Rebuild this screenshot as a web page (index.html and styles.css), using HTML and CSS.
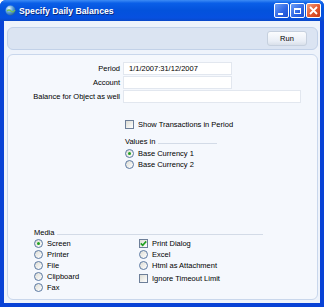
FILE: index.html
```html
<!DOCTYPE html>
<html lang="en">
<head>
    <meta charset="UTF-8">
    <title>Specify Daily Balances</title>
    <link rel="stylesheet" href="styles.css">
</head>
<body>
    <div class="window">
        <div class="titlebar">
            <svg class="app-icon" width="11" height="11" viewBox="0 0 11 11">
                <defs>
                    <radialGradient id="g" cx="0.35" cy="0.3" r="0.8">
                        <stop offset="0" stop-color="#e8f4ff"/>
                        <stop offset="0.5" stop-color="#5aa0d8"/>
                        <stop offset="1" stop-color="#1a4f8a"/>
                    </radialGradient>
                </defs>
                <circle cx="5.5" cy="5.5" r="5" fill="url(#g)"/>
                <path d="M2 6 Q4 4 6 6 T10 5" stroke="#6fbf5a" stroke-width="1.3" fill="none"/>
            </svg>
            <span class="title">Specify Daily Balances</span>
            <div class="title-buttons">
                <div class="tbtn"><span class="min-glyph"></span></div>
                <div class="tbtn"><span class="max-glyph"></span></div>
                <div class="tbtn close">
                    <svg width="9" height="9" viewBox="0 0 9 9"><path d="M1 1 L8 8 M8 1 L1 8" stroke="#fff" stroke-width="1.8"/></svg>
                </div>
            </div>
        </div>

        <div class="content">
            <div class="toolbar">
                <button class="run-btn">Run</button>
            </div>

            <div class="panel">
                <div class="form-rows">
                    <label>Period</label>
                    <div class="field short">1/1/2007:31/12/2007</div>
                    <label>Account</label>
                    <div class="field short"></div>
                    <label>Balance for Object as well</label>
                    <div class="field long"></div>
                </div>

                <div class="options">
                    <div class="check-row">
                        <span class="check"></span>Show Transactions in Period
                    </div>
                    <div class="group-head values-head">
                        <span>Values in</span><span class="rule"></span>
                    </div>
                    <div class="radio-row"><span class="radio on"></span>Base Currency 1</div>
                    <div class="radio-row"><span class="radio"></span>Base Currency 2</div>
                </div>

                <div class="media">
                    <div class="group-head media-head">
                        <span>Media</span><span class="rule"></span>
                    </div>
                    <div class="media-cols">
                        <div class="col">
                            <div class="radio-row"><span class="radio on"></span>Screen</div>
                            <div class="radio-row"><span class="radio"></span>Printer</div>
                            <div class="radio-row"><span class="radio"></span>File</div>
                            <div class="radio-row"><span class="radio"></span>Clipboard</div>
                            <div class="radio-row"><span class="radio"></span>Fax</div>
                        </div>
                        <div class="col">
                            <div class="check-row tight">
                                <span class="check">
                                    <svg width="7" height="7" viewBox="0 0 7 7"><path d="M0.8 3.4 L2.7 5.4 L6.2 1.4" stroke="#21a121" stroke-width="1.6" fill="none"/></svg>
                                </span>Print Dialog
                            </div>
                            <div class="radio-row"><span class="radio"></span>Excel</div>
                            <div class="radio-row"><span class="radio"></span>Html as Attachment</div>
                            <div class="check-row ignore"><span class="check"></span>Ignore Timeout Limit</div>
                        </div>
                    </div>
                </div>
            </div>
        </div>
    </div>
</body>
</html>
```

FILE: styles.css
```css
body {
    margin: 0;
    font-family: "Liberation Sans", Arial, sans-serif;
    font-size: 7.5px;
    color: #000;
    background: #fff;
}
.window {
    width: 324px;
    height: 307px;
    box-sizing: border-box;
    background: #0842d6;
    padding: 0 4px 4px;
    display: flex;
    flex-direction: column;
    border-radius: 6px 6px 0 0;
}
.titlebar {
    height: 21px;
    margin: 0 -4px;
    padding: 0 3px 0 5px;
    display: flex;
    align-items: center;
    border-radius: 6px 6px 0 0;
    background: linear-gradient(#3d8cf5 0%, #0a5fe8 15%, #0352dc 50%, #0650e0 85%, #0a48c8 100%);
}
.app-icon {
    margin-right: 3px;
}
.title {
    color: #fff;
    font-weight: bold;
    font-size: 8.7px;
    text-shadow: 1px 1px 0 #0a2a80;
    flex: 1;
}
.title-buttons {
    display: flex;
    gap: 1px;
}
.tbtn {
    width: 15px;
    height: 15px;
    box-sizing: border-box;
    border: 1px solid #fff;
    border-radius: 2px;
    background: linear-gradient(135deg, #6d9ff7, #2c64e4 60%, #1d4fd0);
    display: flex;
    align-items: center;
    justify-content: center;
    position: relative;
}
.tbtn.close {
    background: linear-gradient(135deg, #f0a080, #e2562e 55%, #c43a16);
}
.min-glyph {
    width: 5px;
    height: 2px;
    background: #fff;
    margin: 6px 3px 0 0;
}
.max-glyph {
    width: 7px;
    height: 6px;
    box-sizing: border-box;
    border: 1px solid #fff;
    border-top-width: 2px;
}
.content {
    flex: 1;
    background: #eef3fb;
    padding: 6px 2px 3px 3px;
    display: flex;
    flex-direction: column;
    gap: 4px;
}
.toolbar {
    height: 23px;
    box-sizing: border-box;
    background: #dbe4f2;
    border: 1px solid #c2d1e8;
    border-radius: 6px;
    display: flex;
    justify-content: flex-end;
    align-items: center;
    padding-right: 10px;
}
.run-btn {
    width: 40px;
    height: 15px;
    padding: 0;
    font-family: inherit;
    font-size: 7.5px;
    border: 1px solid #c6d0de;
    border-radius: 3px;
    background: linear-gradient(#fbfcfe, #e9eef6 70%, #d9e0ea);
}
.panel {
    flex: 1;
    box-sizing: border-box;
    background: #f5f8fd;
    border: 1px solid #c9d7ec;
    border-radius: 6px;
    padding-top: 7px;
    display: flex;
    flex-direction: column;
}
.form-rows {
    display: grid;
    grid-template-columns: 112px auto;
    column-gap: 3px;
    row-gap: 1px;
    align-items: center;
}
.form-rows label {
    text-align: right;
}
.field {
    height: 13px;
    box-sizing: border-box;
    background: #fff;
    border: 1px solid #e2e7ef;
    padding: 0 5px;
    line-height: 11px;
}
.field.short {
    width: 109px;
}
.field.long {
    width: 178px;
}
.options {
    margin: 16px 0 0 117px;
}
.check-row,
.radio-row {
    display: flex;
    align-items: center;
    height: 11px;
}
.check {
    width: 9px;
    height: 9px;
    box-sizing: border-box;
    border: 1px solid #6d7f99;
    background: linear-gradient(135deg, #dcdcd4, #fff);
    margin-right: 4px;
    display: flex;
    align-items: center;
    justify-content: center;
}
.radio {
    width: 9px;
    height: 9px;
    box-sizing: border-box;
    border: 1px solid #5b79a2;
    border-radius: 50%;
    background: linear-gradient(135deg, #dcdcd4, #fff);
    margin-right: 4px;
    display: flex;
    align-items: center;
    justify-content: center;
}
.radio.on::after {
    content: "";
    width: 3px;
    height: 3px;
    border-radius: 50%;
    background: #21a121;
}
.group-head {
    display: flex;
    align-items: center;
    height: 9px;
}
.group-head .rule {
    height: 1px;
    background: #d3dbe7;
    margin: 3px 0 0 3px;
}
.values-head {
    margin: 7px 0 2px;
}
.values-head .rule {
    width: 59px;
}
.media {
    margin: auto 0 6px 26px;
}
.media-head .rule {
    width: 206px;
}
.media-head {
    margin-bottom: 1px;
}
.media-cols {
    display: grid;
    grid-template-columns: 105px auto;
}
.check-row.ignore {
    height: 12px;
    margin-top: 1px;
}
```
